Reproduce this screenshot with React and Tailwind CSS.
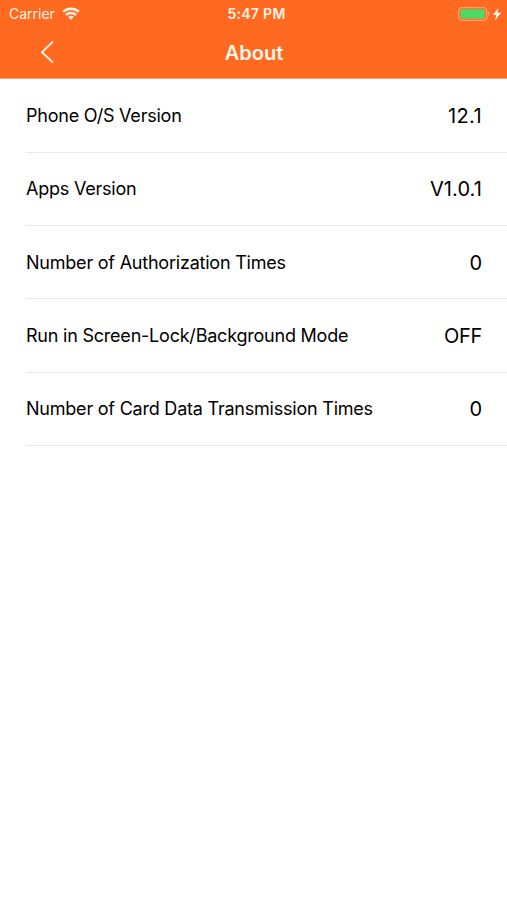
import React from "react";

const rows = [
    { label: "Phone O/S Version", value: "12.1", spacing: "tracking-[0.4px]" },
    { label: "Apps Version", value: "V1.0.1", spacing: "tracking-[0.1px]" },
    { label: "Number of Authorization Times", value: "0", spacing: "tracking-normal" },
    { label: "Run in Screen-Lock/Background Mode", value: "OFF", spacing: "tracking-[-0.3px]" },
    { label: "Number of Card Data Transmission Times", value: "0", spacing: "tracking-normal" },
];

function WifiIcon() {
    return (
        <svg width="18" height="13" viewBox="0 0 18 13" fill="none" stroke="#fff2e4" strokeWidth="2.5">
            <path d="M1.2 4.7C5.6.6 12.4.6 16.8 4.7" />
            <path d="M4 7.9C6.8 5.2 11.2 5.2 14 7.9" />
            <path d="M9 12.7 6.2 9.9c1.6-1.4 4-1.4 5.6 0L9 12.7Z" fill="#fff2e4" stroke="none" />
        </svg>
    );
}

function BatteryIcon() {
    return (
        <svg width="44" height="14" viewBox="0 0 44 14" fill="none">
            <rect x="0.7" y="0.7" width="28" height="12.6" rx="3" stroke="#ff9f6b" strokeWidth="1.3" />
            <rect x="2.4" y="2.2" width="24.4" height="9.6" rx="1.4" fill="#4cd964" />
            <path d="M30 4.8c1.8.6 1.8 3.8 0 4.4V4.8Z" fill="#ff9f6b" />
            <path d="M40.4.9 34.8 8h3.6l-1.5 5.4 6.2-7.6h-3.7l1-4.9Z" fill="#fff8f0" />
        </svg>
    );
}

function StatusBar() {
    return (
        <div className="grid h-[27px] grid-cols-3 items-center pl-[9px] pr-[5px] text-[#fff2e4]">
            <div className="flex items-center gap-[7px]">
                <span className="pb-px text-[14px]">Carrier</span>
                <WifiIcon />
            </div>
            <span className="pb-px pl-[2px] text-center text-[14px] font-semibold tracking-[0.3px]">5:47 PM</span>
            <div className="flex justify-end">
                <BatteryIcon />
            </div>
        </div>
    );
}

function NavBar() {
    return (
        <div className="grid h-[52px] grid-cols-[80px_1fr_80px] items-center border-b border-[#ff9c66] text-[#fff6ea]">
            <button className="pb-px pl-10" aria-label="Back">
                <svg width="15" height="24" viewBox="0 0 15 24" fill="none" stroke="currentColor" strokeWidth="1.8">
                    <path d="M13 1.5 2 12.2l11 10.5" />
                </svg>
            </button>
            <h1 className="pl-px text-center text-xl font-semibold">About</h1>
        </div>
    );
}

export default function App() {
    return (
        <div className="min-h-screen bg-white font-['Inter','Liberation_Sans',sans-serif] text-black">
            <header className="bg-[#ff6a20]">
                <StatusBar />
                <NavBar />
            </header>
            <ul className="pt-[0.5px] pl-[26px]">
                {rows.map((row) => (
                    <li
                        key={row.label}
                        className="flex h-[73.25px] items-center justify-between border-b border-[#e8e8e8] pt-px pr-[25px]"
                    >
                        <span className="text-lg tracking-[-0.22px]">{row.label}</span>
                        <span className={`text-xl ${row.spacing}`}>{row.value}</span>
                    </li>
                ))}
            </ul>
        </div>
    );
}
